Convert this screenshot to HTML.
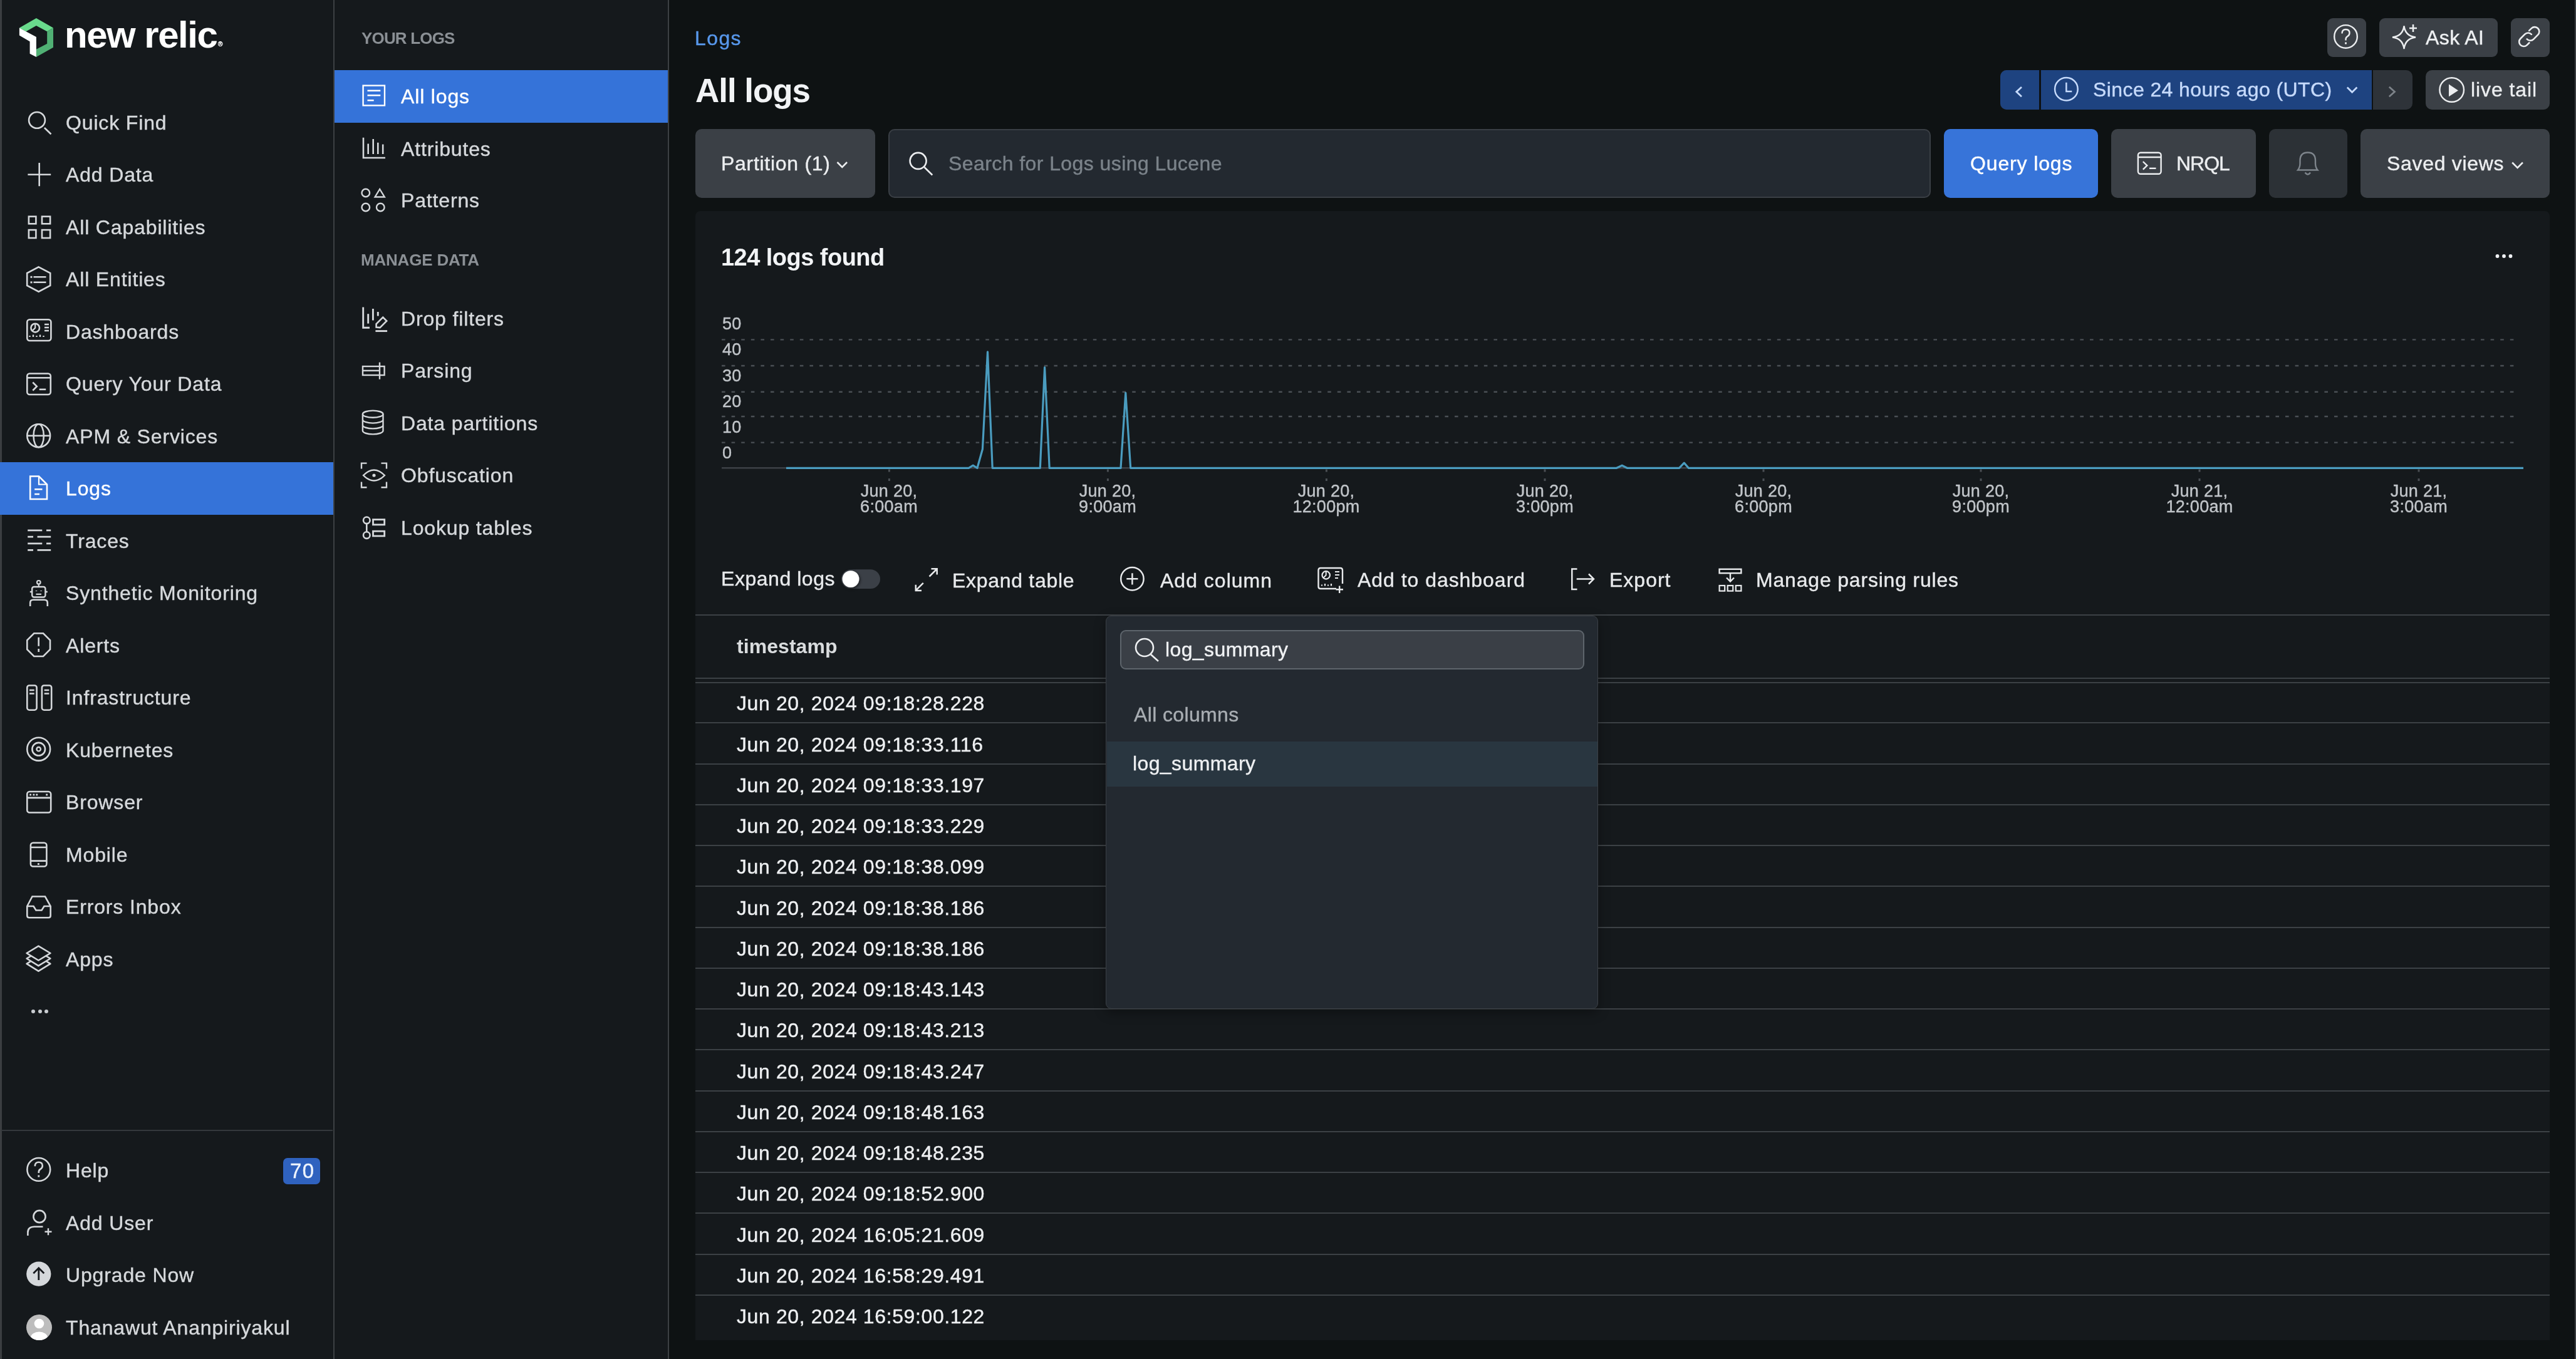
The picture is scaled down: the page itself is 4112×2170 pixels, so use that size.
<!DOCTYPE html><html><head><meta charset="utf-8"><style>
html,body{margin:0;padding:0}
body{width:4112px;height:2170px;overflow:hidden;background:#0e1213;position:relative;font-family:"Liberation Sans",sans-serif}
.t{position:absolute;white-space:nowrap;will-change:transform;-webkit-text-stroke:0.4px currentColor}
.r{position:absolute;display:block}
</style></head><body>
<div class="r" style="left:0.0px;top:0.0px;width:532.0px;height:2170.0px;background:#15191c;"></div>
<div class="r" style="left:534.0px;top:0.0px;width:532.0px;height:2170.0px;background:#15191c;"></div>
<div class="r" style="left:532.0px;top:0.0px;width:2.0px;height:2170.0px;background:#3c4043;"></div>
<div class="r" style="left:1066.0px;top:0.0px;width:2.0px;height:2170.0px;background:#3c4043;"></div>
<div class="r" style="left:0.0px;top:0.0px;width:2.5px;height:2170.0px;background:#3b3e41;"></div>
<div class="r" style="left:4109.5px;top:0.0px;width:2.5px;height:2170.0px;background:#3b3e41;"></div>
<svg class="r" style="left:30px;top:28px" width="56" height="64" viewBox="0 0 56 64">
<polygon points="27.9,1.1 55,16.6 45.2,22.2 27.9,13 11.5,22.2 0.9,16.6" fill="#69da8c"/>
<polygon points="55,16.6 55,47.7 27.9,62.9 27.9,50.8 45.2,41.8 45.2,22.2" fill="#50b074"/>
<polygon points="0.9,16.6 11.5,22.2 27.9,31 27.9,62.9 17.6,57.7 17.6,38.2 0.9,28.4" fill="#ffffff"/>
</svg>
<div class="t" style="left:102.6px;top:26.2px;font-size:60px;line-height:60px;color:#ffffff;font-weight:700;letter-spacing:-1.5px;-webkit-text-stroke:0;">new relic</div>
<div class="t" style="left:348px;top:66px;font-size:10px;line-height:10px;color:#ffffff">&reg;</div>
<div class="t" style="left:105.0px;top:179.9px;font-size:32px;line-height:32px;color:#d6d9dc;font-weight:400;letter-spacing:0.85px;">Quick Find</div>
<div class="t" style="left:105.0px;top:263.4px;font-size:32px;line-height:32px;color:#d6d9dc;font-weight:400;letter-spacing:0.85px;">Add Data</div>
<div class="t" style="left:105.0px;top:346.9px;font-size:32px;line-height:32px;color:#d6d9dc;font-weight:400;letter-spacing:0.85px;">All Capabilities</div>
<div class="t" style="left:105.0px;top:430.4px;font-size:32px;line-height:32px;color:#d6d9dc;font-weight:400;letter-spacing:0.85px;">All Entities</div>
<div class="t" style="left:105.0px;top:513.9px;font-size:32px;line-height:32px;color:#d6d9dc;font-weight:400;letter-spacing:0.85px;">Dashboards</div>
<div class="t" style="left:105.0px;top:597.4px;font-size:32px;line-height:32px;color:#d6d9dc;font-weight:400;letter-spacing:0.85px;">Query Your Data</div>
<div class="t" style="left:105.0px;top:680.9px;font-size:32px;line-height:32px;color:#d6d9dc;font-weight:400;letter-spacing:0.85px;">APM &amp; Services</div>
<div class="r" style="left:0.0px;top:738.0px;width:532.0px;height:84.0px;background:#3573d9;"></div>
<div class="t" style="left:105.0px;top:764.4px;font-size:32px;line-height:32px;color:#ffffff;font-weight:400;letter-spacing:0.85px;">Logs</div>
<div class="t" style="left:105.0px;top:847.9px;font-size:32px;line-height:32px;color:#d6d9dc;font-weight:400;letter-spacing:0.85px;">Traces</div>
<div class="t" style="left:105.0px;top:931.4px;font-size:32px;line-height:32px;color:#d6d9dc;font-weight:400;letter-spacing:0.85px;">Synthetic Monitoring</div>
<div class="t" style="left:105.0px;top:1014.9px;font-size:32px;line-height:32px;color:#d6d9dc;font-weight:400;letter-spacing:0.85px;">Alerts</div>
<div class="t" style="left:105.0px;top:1098.4px;font-size:32px;line-height:32px;color:#d6d9dc;font-weight:400;letter-spacing:0.85px;">Infrastructure</div>
<div class="t" style="left:105.0px;top:1181.9px;font-size:32px;line-height:32px;color:#d6d9dc;font-weight:400;letter-spacing:0.85px;">Kubernetes</div>
<div class="t" style="left:105.0px;top:1265.4px;font-size:32px;line-height:32px;color:#d6d9dc;font-weight:400;letter-spacing:0.85px;">Browser</div>
<div class="t" style="left:105.0px;top:1348.9px;font-size:32px;line-height:32px;color:#d6d9dc;font-weight:400;letter-spacing:0.85px;">Mobile</div>
<div class="t" style="left:105.0px;top:1432.4px;font-size:32px;line-height:32px;color:#d6d9dc;font-weight:400;letter-spacing:0.85px;">Errors Inbox</div>
<div class="t" style="left:105.0px;top:1515.9px;font-size:32px;line-height:32px;color:#d6d9dc;font-weight:400;letter-spacing:0.85px;">Apps</div>
<div class="r" style="left:50.0px;top:1611.5px;width:6px;height:6px;border-radius:3px;background:#c9ccd0"></div>
<div class="r" style="left:60.5px;top:1611.5px;width:6px;height:6px;border-radius:3px;background:#c9ccd0"></div>
<div class="r" style="left:71.0px;top:1611.5px;width:6px;height:6px;border-radius:3px;background:#c9ccd0"></div>
<div class="r" style="left:2.0px;top:1804.0px;width:529.0px;height:2.0px;background:#34383c;"></div>
<div class="t" style="left:105.0px;top:1853.0px;font-size:32px;line-height:32px;color:#d6d9dc;font-weight:400;letter-spacing:0.85px;">Help</div>
<div class="t" style="left:105.0px;top:1936.5px;font-size:32px;line-height:32px;color:#d6d9dc;font-weight:400;letter-spacing:0.85px;">Add User</div>
<div class="t" style="left:105.0px;top:2020.0px;font-size:32px;line-height:32px;color:#d6d9dc;font-weight:400;letter-spacing:0.85px;">Upgrade Now</div>
<div class="t" style="left:105.0px;top:2103.5px;font-size:32px;line-height:32px;color:#d6d9dc;font-weight:400;letter-spacing:0.85px;">Thanawut Ananpiriyakul</div>
<div class="r" style="left:452.0px;top:1849.0px;width:59.0px;height:42.0px;background:#2f62bf;border-radius:7px"></div>
<div class="t" style="left:462.5px;top:1852.6px;font-size:33px;line-height:33px;color:#eef4fd;font-weight:400;letter-spacing:1.5px;">70</div>
<div class="t" style="left:577.0px;top:48.2px;font-size:26px;line-height:26px;color:#8b9095;font-weight:700;letter-spacing:-0.83px;-webkit-text-stroke:0;">YOUR LOGS</div>
<div class="t" style="left:575.9px;top:401.6px;font-size:26px;line-height:26px;color:#8b9095;font-weight:700;letter-spacing:-0.2px;-webkit-text-stroke:0;">MANAGE DATA</div>
<div class="r" style="left:534.0px;top:112.0px;width:532.0px;height:84.0px;background:#3573d9;"></div>
<div class="t" style="left:639.5px;top:138.4px;font-size:32px;line-height:32px;color:#ffffff;font-weight:400;letter-spacing:0.85px;">All logs</div>
<div class="t" style="left:639.5px;top:221.8px;font-size:32px;line-height:32px;color:#d6d9dc;font-weight:400;letter-spacing:0.85px;">Attributes</div>
<div class="t" style="left:639.5px;top:304.4px;font-size:32px;line-height:32px;color:#d6d9dc;font-weight:400;letter-spacing:0.85px;">Patterns</div>
<div class="t" style="left:639.5px;top:492.6px;font-size:32px;line-height:32px;color:#d6d9dc;font-weight:400;letter-spacing:0.85px;">Drop filters</div>
<div class="t" style="left:639.5px;top:576.0px;font-size:32px;line-height:32px;color:#d6d9dc;font-weight:400;letter-spacing:0.85px;">Parsing</div>
<div class="t" style="left:639.5px;top:659.5px;font-size:32px;line-height:32px;color:#d6d9dc;font-weight:400;letter-spacing:0.85px;">Data partitions</div>
<div class="t" style="left:639.5px;top:743.4px;font-size:32px;line-height:32px;color:#d6d9dc;font-weight:400;letter-spacing:0.85px;">Obfuscation</div>
<div class="t" style="left:639.5px;top:826.8px;font-size:32px;line-height:32px;color:#d6d9dc;font-weight:400;letter-spacing:0.85px;">Lookup tables</div>
<div class="t" style="left:1109.0px;top:44.7px;font-size:32px;line-height:32px;color:#5898ec;font-weight:400;letter-spacing:1.4px;">Logs</div>
<div class="t" style="left:1110.0px;top:118.0px;font-size:53px;line-height:53px;color:#f1f3f5;font-weight:700;letter-spacing:-1.06px;-webkit-text-stroke:0;">All logs</div>
<div class="r" style="left:3715.0px;top:29.0px;width:62.0px;height:62.0px;background:#3b4046;border-radius:9px"></div>
<div class="r" style="left:3798.0px;top:29.0px;width:189.0px;height:62.0px;background:#3b4046;border-radius:9px"></div>
<div class="r" style="left:4008.0px;top:29.0px;width:62.0px;height:62.0px;background:#3b4046;border-radius:9px"></div>
<div class="t" style="left:3872.3px;top:44.3px;font-size:32px;line-height:32px;color:#eef0f2;font-weight:400;letter-spacing:0.42px;">Ask AI</div>
<div class="r" style="left:3193.0px;top:112.0px;width:657.5px;height:63.0px;background:#2e3339;border-radius:10px"></div>
<div class="r" style="left:3193px;top:112px;width:593px;height:63px;background:#1e4380;border-radius:10px 0 0 10px"></div>
<div class="r" style="left:3255.0px;top:112.0px;width:3.0px;height:63.0px;background:#0e1113;"></div>
<div class="r" style="left:3786.0px;top:112.0px;width:2.0px;height:63.0px;background:#0e1113;"></div>
<div class="t" style="left:3341.0px;top:126.9px;font-size:32px;line-height:32px;color:#c6dafb;font-weight:400;letter-spacing:0.41px;">Since 24 hours ago (UTC)</div>
<div class="r" style="left:3872.0px;top:112.0px;width:198.0px;height:63.0px;background:#3b4046;border-radius:10px"></div>
<div class="t" style="left:3944.3px;top:127.3px;font-size:32px;line-height:32px;color:#eceef0;font-weight:400;letter-spacing:0.9px;">live tail</div>
<div class="r" style="left:1110.0px;top:206.0px;width:287.0px;height:110.0px;background:#3b4046;border-radius:10px"></div>
<div class="t" style="left:1151.0px;top:244.5px;font-size:32px;line-height:32px;color:#eceef0;font-weight:400;letter-spacing:0.71px;">Partition (1)</div>
<div class="r" style="left:1418px;top:206px;width:1664px;height:110px;background:#232930;border:2px solid #3a3f45;box-sizing:border-box;border-radius:10px"></div>
<div class="t" style="left:1513.5px;top:244.7px;font-size:32px;line-height:32px;color:#7b838a;font-weight:400;letter-spacing:0.42px;">Search for Logs using Lucene</div>
<div class="r" style="left:3103.0px;top:206.0px;width:246.0px;height:110.0px;background:#3774d9;border-radius:10px"></div>
<div class="t" style="left:3145.0px;top:244.7px;font-size:32px;line-height:32px;color:#ffffff;font-weight:400;letter-spacing:0.86px;">Query logs</div>
<div class="r" style="left:3370.0px;top:206.0px;width:231.0px;height:110.0px;background:#3b4046;border-radius:10px"></div>
<div class="t" style="left:3474.0px;top:244.9px;font-size:32px;line-height:32px;color:#eceef0;font-weight:400;letter-spacing:-1.0px;">NRQL</div>
<div class="r" style="left:3622.0px;top:206.0px;width:125.0px;height:110.0px;background:#2c3136;border-radius:10px"></div>
<div class="r" style="left:3768.0px;top:206.0px;width:302.0px;height:110.0px;background:#3b4046;border-radius:10px"></div>
<div class="t" style="left:3810.4px;top:244.9px;font-size:32px;line-height:32px;color:#eceef0;font-weight:400;letter-spacing:0.68px;">Saved views</div>
<div class="r" style="left:1110.0px;top:337.0px;width:2960.0px;height:1803.0px;background:#15191c;border-radius:8px 8px 0 0"></div>
<div class="t" style="left:1150.8px;top:391.8px;font-size:38px;line-height:38px;color:#f2f4f6;font-weight:700;letter-spacing:-0.53px;-webkit-text-stroke:0;">124 logs found</div>
<div class="t" style="left:1152.5px;top:504.2px;font-size:27px;line-height:27px;color:#c1c5c9;font-weight:400;letter-spacing:0.3px;">50</div>
<div class="t" style="left:1152.5px;top:545.4px;font-size:27px;line-height:27px;color:#c1c5c9;font-weight:400;letter-spacing:0.3px;">40</div>
<div class="t" style="left:1152.5px;top:587.2px;font-size:27px;line-height:27px;color:#c1c5c9;font-weight:400;letter-spacing:0.3px;">30</div>
<div class="t" style="left:1152.5px;top:628.1px;font-size:27px;line-height:27px;color:#c1c5c9;font-weight:400;letter-spacing:0.3px;">20</div>
<div class="t" style="left:1152.5px;top:669.1px;font-size:27px;line-height:27px;color:#c1c5c9;font-weight:400;letter-spacing:0.3px;">10</div>
<div class="t" style="left:1152.5px;top:710.4px;font-size:27px;line-height:27px;color:#c1c5c9;font-weight:400;letter-spacing:0.3px;">0</div>
<div class="t" style="left:1319.4px;width:200px;text-align:center;top:770.9px;font-size:27px;line-height:27px;color:#c1c5c9;letter-spacing:0.3px">Jun 20,</div>
<div class="t" style="left:1319.4px;width:200px;text-align:center;top:796.3px;font-size:27px;line-height:27px;color:#c1c5c9;letter-spacing:0.3px">6:00am</div>
<div class="t" style="left:1668.4px;width:200px;text-align:center;top:770.9px;font-size:27px;line-height:27px;color:#c1c5c9;letter-spacing:0.3px">Jun 20,</div>
<div class="t" style="left:1668.4px;width:200px;text-align:center;top:796.3px;font-size:27px;line-height:27px;color:#c1c5c9;letter-spacing:0.3px">9:00am</div>
<div class="t" style="left:2017.4px;width:200px;text-align:center;top:770.9px;font-size:27px;line-height:27px;color:#c1c5c9;letter-spacing:0.3px">Jun 20,</div>
<div class="t" style="left:2017.4px;width:200px;text-align:center;top:796.3px;font-size:27px;line-height:27px;color:#c1c5c9;letter-spacing:0.3px">12:00pm</div>
<div class="t" style="left:2366.0px;width:200px;text-align:center;top:770.9px;font-size:27px;line-height:27px;color:#c1c5c9;letter-spacing:0.3px">Jun 20,</div>
<div class="t" style="left:2366.0px;width:200px;text-align:center;top:796.3px;font-size:27px;line-height:27px;color:#c1c5c9;letter-spacing:0.3px">3:00pm</div>
<div class="t" style="left:2715.0px;width:200px;text-align:center;top:770.9px;font-size:27px;line-height:27px;color:#c1c5c9;letter-spacing:0.3px">Jun 20,</div>
<div class="t" style="left:2715.0px;width:200px;text-align:center;top:796.3px;font-size:27px;line-height:27px;color:#c1c5c9;letter-spacing:0.3px">6:00pm</div>
<div class="t" style="left:3062.0px;width:200px;text-align:center;top:770.9px;font-size:27px;line-height:27px;color:#c1c5c9;letter-spacing:0.3px">Jun 20,</div>
<div class="t" style="left:3062.0px;width:200px;text-align:center;top:796.3px;font-size:27px;line-height:27px;color:#c1c5c9;letter-spacing:0.3px">9:00pm</div>
<div class="t" style="left:3411.0px;width:200px;text-align:center;top:770.9px;font-size:27px;line-height:27px;color:#c1c5c9;letter-spacing:0.3px">Jun 21,</div>
<div class="t" style="left:3411.0px;width:200px;text-align:center;top:796.3px;font-size:27px;line-height:27px;color:#c1c5c9;letter-spacing:0.3px">12:00am</div>
<div class="t" style="left:3761.0px;width:200px;text-align:center;top:770.9px;font-size:27px;line-height:27px;color:#c1c5c9;letter-spacing:0.3px">Jun 21,</div>
<div class="t" style="left:3761.0px;width:200px;text-align:center;top:796.3px;font-size:27px;line-height:27px;color:#c1c5c9;letter-spacing:0.3px">3:00am</div>
<div class="t" style="left:1150.7px;top:907.5px;font-size:32px;line-height:32px;color:#e8eaec;font-weight:400;letter-spacing:0.54px;">Expand logs</div>
<div class="t" style="left:1519.8px;top:910.6px;font-size:32px;line-height:32px;color:#e8eaec;font-weight:400;letter-spacing:0.7px;">Expand table</div>
<div class="t" style="left:1852.0px;top:910.6px;font-size:32px;line-height:32px;color:#e8eaec;font-weight:400;letter-spacing:1.0px;">Add column</div>
<div class="t" style="left:2166.6px;top:910.4px;font-size:32px;line-height:32px;color:#e8eaec;font-weight:400;letter-spacing:0.96px;">Add to dashboard</div>
<div class="t" style="left:2569.0px;top:910.4px;font-size:32px;line-height:32px;color:#e8eaec;font-weight:400;letter-spacing:1.0px;">Export</div>
<div class="t" style="left:2802.5px;top:910.4px;font-size:32px;line-height:32px;color:#e8eaec;font-weight:400;letter-spacing:0.81px;">Manage parsing rules</div>
<div class="r" style="left:1110.0px;top:980.5px;width:2960.0px;height:2.0px;background:#3c4145;"></div>
<div class="r" style="left:1110.0px;top:1081.5px;width:2960.0px;height:2.0px;background:#3c4145;"></div>
<div class="r" style="left:1110.0px;top:1089.0px;width:2960.0px;height:2.0px;background:#3c4145;"></div>
<div class="t" style="left:1176.0px;top:1016.4px;font-size:32px;line-height:32px;color:#d9dcde;font-weight:700;letter-spacing:0.06px;-webkit-text-stroke:0;">timestamp</div>
<div class="t" style="left:1176.3px;top:1107.3px;font-size:32px;line-height:32px;color:#eef0f2;font-weight:400;letter-spacing:0.61px;">Jun 20, 2024 09:18:28.228</div>
<div class="r" style="left:1110.0px;top:1153.4px;width:2960.0px;height:2.0px;background:#3c4145;"></div>
<div class="t" style="left:1176.3px;top:1172.6px;font-size:32px;line-height:32px;color:#eef0f2;font-weight:400;letter-spacing:0.61px;">Jun 20, 2024 09:18:33.116</div>
<div class="r" style="left:1110.0px;top:1218.7px;width:2960.0px;height:2.0px;background:#3c4145;"></div>
<div class="t" style="left:1176.3px;top:1237.8px;font-size:32px;line-height:32px;color:#eef0f2;font-weight:400;letter-spacing:0.61px;">Jun 20, 2024 09:18:33.197</div>
<div class="r" style="left:1110.0px;top:1283.9px;width:2960.0px;height:2.0px;background:#3c4145;"></div>
<div class="t" style="left:1176.3px;top:1303.1px;font-size:32px;line-height:32px;color:#eef0f2;font-weight:400;letter-spacing:0.61px;">Jun 20, 2024 09:18:33.229</div>
<div class="r" style="left:1110.0px;top:1349.2px;width:2960.0px;height:2.0px;background:#3c4145;"></div>
<div class="t" style="left:1176.3px;top:1368.3px;font-size:32px;line-height:32px;color:#eef0f2;font-weight:400;letter-spacing:0.61px;">Jun 20, 2024 09:18:38.099</div>
<div class="r" style="left:1110.0px;top:1414.4px;width:2960.0px;height:2.0px;background:#3c4145;"></div>
<div class="t" style="left:1176.3px;top:1433.6px;font-size:32px;line-height:32px;color:#eef0f2;font-weight:400;letter-spacing:0.61px;">Jun 20, 2024 09:18:38.186</div>
<div class="r" style="left:1110.0px;top:1479.7px;width:2960.0px;height:2.0px;background:#3c4145;"></div>
<div class="t" style="left:1176.3px;top:1498.8px;font-size:32px;line-height:32px;color:#eef0f2;font-weight:400;letter-spacing:0.61px;">Jun 20, 2024 09:18:38.186</div>
<div class="r" style="left:1110.0px;top:1544.9px;width:2960.0px;height:2.0px;background:#3c4145;"></div>
<div class="t" style="left:1176.3px;top:1564.1px;font-size:32px;line-height:32px;color:#eef0f2;font-weight:400;letter-spacing:0.61px;">Jun 20, 2024 09:18:43.143</div>
<div class="r" style="left:1110.0px;top:1610.2px;width:2960.0px;height:2.0px;background:#3c4145;"></div>
<div class="t" style="left:1176.3px;top:1629.3px;font-size:32px;line-height:32px;color:#eef0f2;font-weight:400;letter-spacing:0.61px;">Jun 20, 2024 09:18:43.213</div>
<div class="r" style="left:1110.0px;top:1675.4px;width:2960.0px;height:2.0px;background:#3c4145;"></div>
<div class="t" style="left:1176.3px;top:1694.6px;font-size:32px;line-height:32px;color:#eef0f2;font-weight:400;letter-spacing:0.61px;">Jun 20, 2024 09:18:43.247</div>
<div class="r" style="left:1110.0px;top:1740.7px;width:2960.0px;height:2.0px;background:#3c4145;"></div>
<div class="t" style="left:1176.3px;top:1759.8px;font-size:32px;line-height:32px;color:#eef0f2;font-weight:400;letter-spacing:0.61px;">Jun 20, 2024 09:18:48.163</div>
<div class="r" style="left:1110.0px;top:1805.9px;width:2960.0px;height:2.0px;background:#3c4145;"></div>
<div class="t" style="left:1176.3px;top:1825.1px;font-size:32px;line-height:32px;color:#eef0f2;font-weight:400;letter-spacing:0.61px;">Jun 20, 2024 09:18:48.235</div>
<div class="r" style="left:1110.0px;top:1871.2px;width:2960.0px;height:2.0px;background:#3c4145;"></div>
<div class="t" style="left:1176.3px;top:1890.3px;font-size:32px;line-height:32px;color:#eef0f2;font-weight:400;letter-spacing:0.61px;">Jun 20, 2024 09:18:52.900</div>
<div class="r" style="left:1110.0px;top:1936.4px;width:2960.0px;height:2.0px;background:#3c4145;"></div>
<div class="t" style="left:1176.3px;top:1955.6px;font-size:32px;line-height:32px;color:#eef0f2;font-weight:400;letter-spacing:0.61px;">Jun 20, 2024 16:05:21.609</div>
<div class="r" style="left:1110.0px;top:2001.7px;width:2960.0px;height:2.0px;background:#3c4145;"></div>
<div class="t" style="left:1176.3px;top:2020.8px;font-size:32px;line-height:32px;color:#eef0f2;font-weight:400;letter-spacing:0.61px;">Jun 20, 2024 16:58:29.491</div>
<div class="r" style="left:1110.0px;top:2066.9px;width:2960.0px;height:2.0px;background:#3c4145;"></div>
<div class="t" style="left:1176.3px;top:2086.1px;font-size:32px;line-height:32px;color:#eef0f2;font-weight:400;letter-spacing:0.61px;">Jun 20, 2024 16:59:00.122</div>
<svg class="r" style="left:0;top:0" width="4112" height="2170" viewBox="0 0 4112 2170">
<line x1="1152" y1="542.4" x2="4022" y2="542.4" stroke="#4a4f54" stroke-width="2.4" stroke-dasharray="5.6 10"/>
<line x1="1152" y1="584" x2="4022" y2="584" stroke="#4a4f54" stroke-width="2.4" stroke-dasharray="5.6 10"/>
<line x1="1152" y1="625.8" x2="4022" y2="625.8" stroke="#4a4f54" stroke-width="2.4" stroke-dasharray="5.6 10"/>
<line x1="1152" y1="665" x2="4022" y2="665" stroke="#4a4f54" stroke-width="2.4" stroke-dasharray="5.6 10"/>
<line x1="1152" y1="706.6" x2="4022" y2="706.6" stroke="#4a4f54" stroke-width="2.4" stroke-dasharray="5.6 10"/>
<line x1="1152" y1="747.3" x2="4028" y2="747.3" stroke="#3d4146" stroke-width="2.5"/>
<line x1="1419.4" y1="749.5" x2="1419.4" y2="768" stroke="#4a4f54" stroke-width="3" stroke-dasharray="4 10.5"/>
<line x1="1768.4" y1="749.5" x2="1768.4" y2="768" stroke="#4a4f54" stroke-width="3" stroke-dasharray="4 10.5"/>
<line x1="2117.4" y1="749.5" x2="2117.4" y2="768" stroke="#4a4f54" stroke-width="3" stroke-dasharray="4 10.5"/>
<line x1="2466" y1="749.5" x2="2466" y2="768" stroke="#4a4f54" stroke-width="3" stroke-dasharray="4 10.5"/>
<line x1="2815" y1="749.5" x2="2815" y2="768" stroke="#4a4f54" stroke-width="3" stroke-dasharray="4 10.5"/>
<line x1="3162" y1="749.5" x2="3162" y2="768" stroke="#4a4f54" stroke-width="3" stroke-dasharray="4 10.5"/>
<line x1="3511" y1="749.5" x2="3511" y2="768" stroke="#4a4f54" stroke-width="3" stroke-dasharray="4 10.5"/>
<line x1="3861" y1="749.5" x2="3861" y2="768" stroke="#4a4f54" stroke-width="3" stroke-dasharray="4 10.5"/>
<polyline fill="none" stroke="#4a9cbf" stroke-width="3.2" stroke-linejoin="round" points="1255,747.3 1546.2,747.3 1553.2,743.2 1560,747.3 1568.4,717.3 1576.5,561.9 1584.2,747.3 1660.3,747.3 1667.6,586.6 1675.2,747.3 1789,747.3 1796.8,627.4 1804.7,747.3 2580.5,747.3 2589.2,743.2 2597.3,747.3 2680.5,747.3 2688.3,739.1 2695.4,747.3 4028,747.3"/>
<circle cx="3986.5" cy="409" r="2.9" fill="#f0f2f4"/>
<circle cx="3997" cy="409" r="2.9" fill="#f0f2f4"/>
<circle cx="4007.5" cy="409" r="2.9" fill="#f0f2f4"/>
<circle cx="59" cy="191.9" r="12.9" stroke="#d5d8db" stroke-width="2.6" fill="none"/>
<path d="M70.9,204 L81.5,214.3" stroke="#d5d8db" stroke-width="2.6" fill="none" />
<path d="M44.4,278.7 H81.2 M62.7,260 V297.3" stroke="#d5d8db" stroke-width="2.6" fill="none" />
<rect x="45.9" y="345.7" width="11.5" height="11.6" rx="0" stroke="#d5d8db" stroke-width="2.6" fill="none"/>
<rect x="67" y="345.7" width="13.1" height="11.6" rx="0" stroke="#d5d8db" stroke-width="2.6" fill="none"/>
<rect x="45.9" y="367.1" width="11.5" height="12.9" rx="0" stroke="#d5d8db" stroke-width="2.6" fill="none"/>
<rect x="67" y="367.1" width="13.1" height="12.9" rx="0" stroke="#d5d8db" stroke-width="2.6" fill="none"/>
<path d="M61.7,426.3 L80.2,436 V456 L61.7,465.7 L43.2,456 V436 Z" stroke="#d5d8db" stroke-width="2.6" fill="none" />
<path d="M53.5,442.3 H73.5 M53.5,450.8 H73.5" stroke="#d5d8db" stroke-width="2.6" fill="none" />
<rect x="48.5" y="440.8" width="3" height="3" fill="#d5d8db"/><rect x="48.5" y="449.3" width="3" height="3" fill="#d5d8db"/>
<rect x="43.3" y="510.3" width="38.1" height="33.7" rx="4" stroke="#d5d8db" stroke-width="2.6" fill="none"/>
<circle cx="56.2" cy="523.6" r="6.8" stroke="#d5d8db" stroke-width="2.6" fill="none"/>
<path d="M56.2,516.8 V523.6 L51.3,528.4" stroke="#d5d8db" stroke-width="2.2" fill="none" />
<path d="M71,518 H78 M71,523 H78 M71,528 H78" stroke="#d5d8db" stroke-width="2.4" fill="none" />
<path d="M47.5,538 V536 M53,538 V534.5 M58.5,538 V536 M64,538 V534.5 M69.5,538 V536" stroke="#d5d8db" stroke-width="2.4" fill="none" />
<rect x="43.3" y="596.5" width="37.5" height="33.5" rx="4" stroke="#d5d8db" stroke-width="2.6" fill="none"/>
<path d="M43.3,603.3 H80.8" stroke="#d5d8db" stroke-width="2.6" fill="none" />
<path d="M52.3,610.5 L58.8,617 L52.3,623.5" stroke="#d5d8db" stroke-width="2.6" fill="none" />
<path d="M62.7,621.8 H73.2" stroke="#d5d8db" stroke-width="2.6" fill="none" />
<circle cx="61.7" cy="695.7" r="18.4" stroke="#d5d8db" stroke-width="2.6" fill="none"/>
<ellipse cx="61.7" cy="695.7" rx="8.2" ry="18.4" stroke="#d5d8db" stroke-width="2.6" fill="none"/>
<path d="M43.3,695.7 H80.1" stroke="#d5d8db" stroke-width="2.6" fill="none" />
<path d="M48.2,760.5 H62 L75,773.5 V797 H48.2 Z" stroke="#ffffff" stroke-width="2.6" fill="none" />
<path d="M62,760.5 V773.5 H75" stroke="#ffffff" stroke-width="2.2" fill="none" />
<path d="M55.2,781.2 H67.5 M55.2,789 H63" stroke="#ffffff" stroke-width="2.6" fill="none" />
<path d="M44.2,846.8 H67.3 M74,846.8 H81.2 M44.2,857.2 H53 M59.6,857.2 H81.2 M44.2,867.8 H67.3 M74,867.8 H81.2 M44.2,878.4 H53 M59.6,878.4 H81.2" stroke="#d5d8db" stroke-width="2.8" fill="none" />
<circle cx="61.8" cy="929.8" r="2.8" stroke="#d5d8db" stroke-width="2.2" fill="none"/>
<path d="M61.8,932.6 V936.5" stroke="#d5d8db" stroke-width="2.2" fill="none" />
<rect x="51.2" y="937" width="21.2" height="16.5" rx="3" stroke="#d5d8db" stroke-width="2.4" fill="none"/>
<path d="M47.8,945 H51.2 M72.4,945 H75.8" stroke="#d5d8db" stroke-width="2.4" fill="none" />
<path d="M58,943 V944 M65.6,943 V944" stroke="#d5d8db" stroke-width="2.6" fill="none" />
<path d="M57.5,948.8 H66" stroke="#d5d8db" stroke-width="2.2" fill="none" />
<path d="M48.2,968 V962.5 Q48.2,957.8 53,957.8 H70.6 Q75.8,957.8 75.8,962.5 V968" stroke="#d5d8db" stroke-width="2.6" fill="none" />
<path d="M54.3,1011.3 H69 L80,1022.3 V1037 L69,1048 H54.3 L43.3,1037 V1022.3 Z" stroke="#d5d8db" stroke-width="2.6" fill="none" />
<path d="M61.7,1017.7 V1031.8 M61.7,1036 V1041" stroke="#d5d8db" stroke-width="2.6" fill="none" />
<rect x="43.3" y="1094.5" width="15.3" height="39.2" rx="3.5" stroke="#d5d8db" stroke-width="2.6" fill="none"/>
<rect x="66.9" y="1094.5" width="15.3" height="39.2" rx="3.5" stroke="#d5d8db" stroke-width="2.6" fill="none"/>
<path d="M47,1102 H54.7 M47,1107.5 H54.7 M70.7,1102 H78.4 M70.7,1107.5 H78.4" stroke="#d5d8db" stroke-width="2.4" fill="none" />
<circle cx="61.7" cy="1196.2" r="18.4" stroke="#d5d8db" stroke-width="2.6" fill="none"/>
<circle cx="61.7" cy="1196.2" r="10.3" stroke="#d5d8db" stroke-width="2.6" fill="none"/>
<circle cx="61.7" cy="1196.2" r="3.2" stroke="#d5d8db" stroke-width="2.4" fill="none"/>
<rect x="43.3" y="1264" width="37.9" height="33.5" rx="4" stroke="#d5d8db" stroke-width="2.6" fill="none"/>
<path d="M43.3,1273.9 H81.2" stroke="#d5d8db" stroke-width="2.6" fill="none" />
<rect x="47.2" y="1267.6" width="2.8" height="2.8" fill="#d5d8db"/>
<rect x="52.5" y="1267.6" width="2.8" height="2.8" fill="#d5d8db"/>
<rect x="57.4" y="1267.6" width="2.8" height="2.8" fill="#d5d8db"/>
<rect x="73.3" y="1267.6" width="2.8" height="2.8" fill="#d5d8db"/>
<rect x="48.9" y="1345.8" width="25.5" height="37.7" rx="4" stroke="#d5d8db" stroke-width="2.6" fill="none"/>
<path d="M48.9,1353 H74.4 M48.9,1374.6 H74.4" stroke="#d5d8db" stroke-width="2.6" fill="none" />
<rect x="60" y="1378.2" width="2.8" height="2.8" fill="#d5d8db"/>
<path d="M43.3,1447 L51.5,1431.5 H72 L80.7,1447 V1462 Q80.7,1465.3 77.4,1465.3 H46.6 Q43.3,1465.3 43.3,1462 Z" stroke="#d5d8db" stroke-width="2.6" fill="none" />
<path d="M43.3,1447 H53.5 L57.5,1453.5 H66.5 L70.5,1447 H80.7" stroke="#d5d8db" stroke-width="2.6" fill="none" />
<path d="M61.4,1510.6 L80.4,1522 L61.4,1533.5 L42.6,1522 Z" stroke="#d5d8db" stroke-width="2.6" fill="none" stroke-linejoin="round"/>
<path d="M49.6,1526.3 L42.6,1530.5 L61.4,1542.2 L80.4,1530.5 L73.4,1526.3" stroke="#d5d8db" stroke-width="2.6" fill="none" stroke-linejoin="round"/>
<path d="M49.5,1534.7 L42.6,1538.9 L61.4,1550.6 L80.4,1538.9 L73.5,1534.7" stroke="#d5d8db" stroke-width="2.6" fill="none" stroke-linejoin="round"/>
<circle cx="61.8" cy="1867.4" r="18.4" stroke="#d5d8db" stroke-width="2.6" fill="none"/>
<path d="M55.8,1862.2 Q55.8,1855.8 61.8,1855.8 Q67.8,1855.8 67.8,1861.6 Q67.8,1865 64.3,1867 Q61.8,1868.5 61.8,1871.5 V1873" stroke="#d5d8db" stroke-width="2.6" fill="none" />
<rect x="60.4" y="1876.5" width="2.8" height="3" fill="#d5d8db"/>
<circle cx="63" cy="1942.5" r="9.6" stroke="#d5d8db" stroke-width="2.6" fill="none"/>
<path d="M44.4,1973 V1968 Q44.4,1958.8 55,1958.8 H68.5" stroke="#d5d8db" stroke-width="2.6" fill="none" />
<path d="M71.5,1966.7 H82.5 M77,1961.2 V1972.2" stroke="#d5d8db" stroke-width="2.4" fill="none" />
<circle cx="61.8" cy="2034.2" r="19.6" stroke="none" stroke-width="2.6" fill="#d5d8db"/>
<path d="M61.8,2044 V2025 M53.3,2033.2 L61.8,2024.7 L70.3,2033.2" stroke="#16191d" stroke-width="2.8" fill="none" />
<defs><clipPath id="av"><circle cx="62.5" cy="2119.5" r="20.5"/></clipPath></defs>
<circle cx="62.5" cy="2119.5" r="20.5" stroke="none" stroke-width="2.6" fill="#bdbdbd"/>
<g clip-path="url(#av)"><circle cx="62.5" cy="2113.5" r="7.8" fill="#ffffff"/><ellipse cx="62.5" cy="2136" rx="13.5" ry="9.5" fill="#ffffff"/></g>
<rect x="579.6" y="136.6" width="34.4" height="31.8" rx="0" stroke="#ffffff" stroke-width="2.4" fill="none"/>
<path d="M586.5,144.7 H607.3 M586.5,152.3 H607.3 M586.5,160.3 H596.7" stroke="#ffffff" stroke-width="2.6" fill="none" />
<path d="M580,219.8 V252 H615" stroke="#d5d8db" stroke-width="2.6" fill="none" />
<path d="M587.7,229.5 V246 M595.7,222 V246 M603.3,227.7 V246 M611.2,230.4 V246" stroke="#d5d8db" stroke-width="2.6" fill="none" />
<circle cx="583.8" cy="308" r="6.3" stroke="#d5d8db" stroke-width="2.4" fill="none"/>
<circle cx="583.8" cy="331" r="6.3" stroke="#d5d8db" stroke-width="2.4" fill="none"/>
<circle cx="607.3" cy="331" r="6.3" stroke="#d5d8db" stroke-width="2.4" fill="none"/>
<path d="M606.2,302 L613.8,314.5 H598.6 Z" stroke="#d5d8db" stroke-width="2.4" fill="none" />
<path d="M579.7,490.4 V523.2 H590" stroke="#d5d8db" stroke-width="2.9" fill="none" />
<path d="M587.7,501.2 V516.6" stroke="#d5d8db" stroke-width="2.9" fill="none" />
<path d="M595.4,493 V511.5 M603.3,498.1 V504.5" stroke="#d5d8db" stroke-width="2.9" fill="none" />
<path d="M600.6,522.6 V517.3 L611.3,506.6 L617.2,512.5 L606.6,523.1 Z" stroke="#d5d8db" stroke-width="2.6" fill="none" />
<path d="M599.4,528.6 H618.1" stroke="#d5d8db" stroke-width="2.9" fill="none" />
<rect x="579" y="585" width="34.6" height="14" rx="0" stroke="#d5d8db" stroke-width="2.4" fill="none"/>
<path d="M579,591.8 H606" stroke="#d5d8db" stroke-width="2.4" fill="none" />
<path d="M606,578.6 V605.6" stroke="#d5d8db" stroke-width="2.4" fill="none" />
<ellipse cx="595.2" cy="661.2" rx="16.3" ry="5.6" stroke="#d5d8db" stroke-width="2.4" fill="none"/>
<path d="M578.9,661.2 V687.8 A16.3,5.6 0 0,0 611.5,687.8 V661.2 M578.9,670 A16.3,5.6 0 0,0 611.5,670 M578.9,678.8 A16.3,5.6 0 0,0 611.5,678.8" stroke="#d5d8db" stroke-width="2.4" fill="none" />
<path d="M577,748.5 V739.6 H585.5 M608.5,739.6 H617 V748.5 M577,769.5 V778.3 H585.5 M608.5,778.3 H617 V769.5" stroke="#d5d8db" stroke-width="2.4" fill="none" />
<path d="M580,759 Q597,742 614,759 Q597,776 580,759 Z" stroke="#d5d8db" stroke-width="2.4" fill="none" />
<circle cx="597" cy="759" r="2.6" stroke="none" stroke-width="2.6" fill="#d5d8db"/>
<circle cx="585.3" cy="830.8" r="5.3" stroke="#d5d8db" stroke-width="2.6" fill="none"/>
<circle cx="585.3" cy="854.6" r="5.3" stroke="#d5d8db" stroke-width="2.6" fill="none"/>
<path d="M585.3,836.1 V849.3" stroke="#d5d8db" stroke-width="2.6" fill="none" />
<rect x="595.5" y="829.6" width="18.2" height="8.2" rx="0" stroke="#d5d8db" stroke-width="2.8" fill="none"/>
<rect x="595.5" y="848.2" width="18.2" height="7.7" rx="0" stroke="#d5d8db" stroke-width="2.8" fill="none"/>
<path d="M1336.5,259 L1344.3,266.8 L1352.1,259" stroke="#eceef0" stroke-width="2.6" fill="none" />
<circle cx="1465.6" cy="256.9" r="13" stroke="#eceef0" stroke-width="2.6" fill="none"/>
<path d="M1475.5,267 L1488.3,279.5" stroke="#eceef0" stroke-width="2.6" fill="none" />
<circle cx="3744.5" cy="58.4" r="18.3" stroke="#eceef0" stroke-width="2.4" fill="none"/>
<path d="M3738.5,53.5 Q3738.5,47 3744.5,47 Q3750.5,47 3750.5,52.8 Q3750.5,56.3 3747,58.3 Q3744.5,59.8 3744.5,62.8 V64.5" stroke="#eceef0" stroke-width="2.4" fill="none" />
<rect x="3743.1" y="67.5" width="2.8" height="3" fill="#eceef0"/>
<path d="M3837.5,41.5 Q3839.5,57.5 3856,59.5 Q3839.5,61.5 3837.5,78 Q3835.5,61.5 3819,59.5 Q3835.5,57.5 3837.5,41.5 Z" stroke="#eceef0" stroke-width="2.4" fill="none" />
<path d="M3852,39 V51 M3846,45 H3858" stroke="#eceef0" stroke-width="2.6" fill="none" />
<path d="M4037.2,48.9 L4041.04,45.14 A7.3,7.3 0 0 1 4051.36,55.46 L4044.26,62.56 A7.3,7.3 0 0 1 4033.7,62.36" stroke="#eceef0" stroke-width="2.6" fill="none" stroke-linecap="round"/>
<path d="M4037.4,68.3 L4033.56,72.06 A7.3,7.3 0 0 1 4023.24,61.74 L4030.34,54.64 A7.3,7.3 0 0 1 4040.9,54.84" stroke="#eceef0" stroke-width="2.6" fill="none" stroke-linecap="round"/>
<path d="M3227,139 L3218.8,146.6 L3227,154.2" stroke="#c6dafb" stroke-width="2.8" fill="none" />
<circle cx="3298.4" cy="142.2" r="18.3" stroke="#c6dafb" stroke-width="2.5" fill="none"/>
<path d="M3298.4,131.7 V146 H3307.3" stroke="#c6dafb" stroke-width="2.5" fill="none" />
<path d="M3746.8,139.5 L3754.6,147.3 L3762.4,139.5" stroke="#c6dafb" stroke-width="2.8" fill="none" />
<path d="M3813.8,138.7 L3822.5,146.5 L3813.8,154.3" stroke="#7d8389" stroke-width="2.8" fill="none" />
<circle cx="3913.7" cy="143.5" r="19.3" stroke="#eceef0" stroke-width="2.4" fill="none"/>
<path d="M3909,134.5 L3924,144.4 L3909,154.3 Z" stroke="none" stroke-width="2.6" fill="#eceef0" />
<rect x="3412.9" y="243.7" width="36.7" height="34" rx="4" stroke="#eceef0" stroke-width="2.4" fill="none"/>
<path d="M3412.9,251 H3449.6" stroke="#eceef0" stroke-width="2.4" fill="none" />
<path d="M3420.8,258 L3427.3,264.3 L3420.8,270.6" stroke="#eceef0" stroke-width="2.4" fill="none" />
<path d="M3431,268.8 H3441.5" stroke="#eceef0" stroke-width="2.4" fill="none" />
<path d="M3668,271.5 H3699.5 Q3696,267 3696,261 V256.5 Q3696,243.5 3683.8,243.5 Q3671.5,243.5 3671.5,256.5 V261 Q3671.5,267 3668,271.5 Z" stroke="#7e858c" stroke-width="2.4" fill="none" />
<path d="M3679.5,275.5 Q3683.8,281.5 3688,275.5" stroke="#7e858c" stroke-width="2.4" fill="none" />
<path d="M4010.2,259.5 L4018.6,267.9 L4027,259.5" stroke="#eceef0" stroke-width="2.6" fill="none" />
<defs><filter id="ks" x="-50%" y="-50%" width="200%" height="200%"><feDropShadow dx="1.5" dy="1.5" stdDeviation="2" flood-color="#000" flood-opacity="0.6"/></filter></defs>
<rect x="1343" y="909.2" width="62" height="30.8" rx="15.4" stroke="none" stroke-width="2.6" fill="#3b4047"/>
<circle cx="1358" cy="924.6" r="13.4" fill="#ffffff" filter="url(#ks)"/>
<path d="M1483.5,920.5 L1496,908 M1486.5,908.3 H1495.7 V917.5" stroke="#e8eaec" stroke-width="2.5" fill="none" />
<path d="M1473.8,930.8 L1461.5,943.2 M1461.8,933.8 V943 H1471" stroke="#e8eaec" stroke-width="2.5" fill="none" />
<circle cx="1807.4" cy="924.3" r="18.2" stroke="#e8eaec" stroke-width="2.5" fill="none"/>
<path d="M1798.3,924.3 H1816.5 M1807.4,915.2 V933.4" stroke="#e8eaec" stroke-width="2.5" fill="none" />
<path d="M2133,940 H2108 Q2104.5,940 2104.5,936.5 V910.5 Q2104.5,907 2108,907 H2139.5 Q2143,907 2143,910.5 V932" stroke="#e8eaec" stroke-width="2.4" fill="none" />
<circle cx="2116.7" cy="918.4" r="6.2" stroke="#e8eaec" stroke-width="2.2" fill="none"/>
<path d="M2116.7,912.2 V918.4 L2112.3,922.8" stroke="#e8eaec" stroke-width="2" fill="none" />
<path d="M2131,913 H2138 M2131,918 H2138 M2131,923 H2136" stroke="#e8eaec" stroke-width="2.2" fill="none" />
<path d="M2110,935.5 V933.5 M2115,935.5 V932 M2120,935.5 V933.5 M2125,935.5 V932" stroke="#e8eaec" stroke-width="2.2" fill="none" />
<path d="M2132.5,941.3 H2144 M2138.2,935.5 V947" stroke="#e8eaec" stroke-width="2.4" fill="none" />
<path d="M2517.5,908.5 H2509.3 V941 H2517.5" stroke="#e8eaec" stroke-width="2.5" fill="none" />
<path d="M2516.7,924.5 H2544 M2536,916.5 L2544,924.5 L2536,932.5" stroke="#e8eaec" stroke-width="2.5" fill="none" />
<rect x="2744.6" y="908.8" width="34.8" height="6.4" rx="0" stroke="#e8eaec" stroke-width="2.4" fill="none"/>
<path d="M2762,915 V928.5 M2756,922.5 L2762,928.5 L2768,922.5" stroke="#e8eaec" stroke-width="2.4" fill="none" />
<rect x="2744.6" y="935" width="8.6" height="8.6" rx="0" stroke="#e8eaec" stroke-width="2.2" fill="none"/>
<rect x="2757.7" y="935" width="8.6" height="8.6" rx="0" stroke="#e8eaec" stroke-width="2.2" fill="none"/>
<rect x="2770.8" y="935" width="8.6" height="8.6" rx="0" stroke="#e8eaec" stroke-width="2.2" fill="none"/>
</svg>
<div class="r" style="left:1765px;top:983px;width:786px;height:628px;box-sizing:border-box;background:#232930;border:1.5px solid #3b4046;border-radius:9px;box-shadow:0 6px 18px rgba(0,0,0,0.35)"></div>
<div class="r" style="left:1788px;top:1006px;width:741px;height:63px;box-sizing:border-box;background:#3a3f46;border:2.5px solid #5e656c;border-radius:9px"></div>
<div class="r" style="left:1766.5px;top:1183.6px;width:783px;height:72px;background:#293640"></div>
<div class="t" style="left:1859.8px;top:1021.2px;font-size:32px;line-height:32px;color:#f0f2f4;font-weight:400;letter-spacing:0.39px">log_summary</div>
<div class="t" style="left:1810.0px;top:1125.2px;font-size:32px;line-height:32px;color:#a8adb2;font-weight:400;letter-spacing:0.36px">All columns</div>
<div class="t" style="left:1808.0px;top:1202.5px;font-size:32px;line-height:32px;color:#eef0f2;font-weight:400;letter-spacing:0.39px">log_summary</div>
<svg class="r" style="left:0;top:0" width="4112" height="2170" viewBox="0 0 4112 2170"><circle cx="1827" cy="1034" r="14" stroke="#eef0f2" stroke-width="2.6" fill="none"/><path d="M1837,1045 L1849,1055.8" stroke="#eef0f2" stroke-width="2.6"/></svg>
</body></html>
